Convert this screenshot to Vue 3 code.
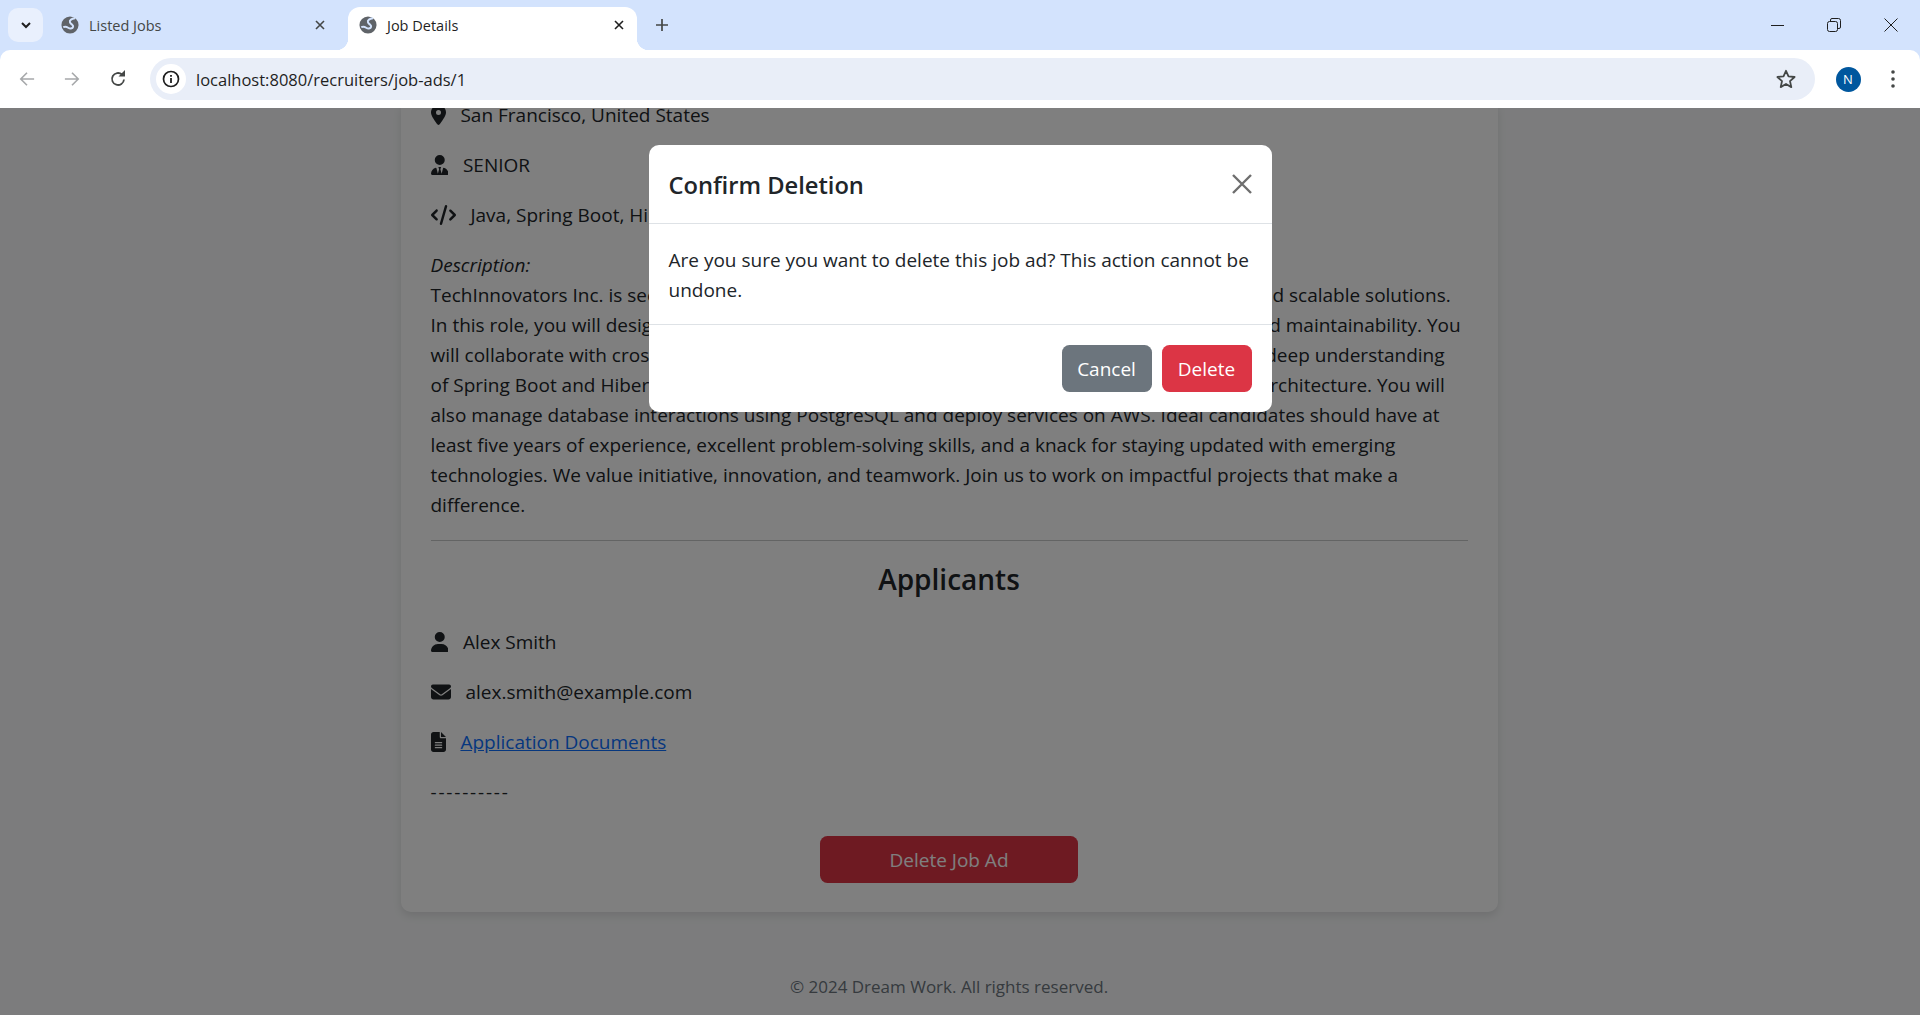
<template>
  <div class="window">
    <div class="tabstrip">
      <button class="tab-search">
        <svg width="14" height="14" viewBox="0 0 14 14"><path d="M3 5l4 4 4-4" fill="none" stroke="#1f1f1f" stroke-width="2"/></svg>
      </button>
      <div class="tab">
        <svg class="globe" viewBox="0 0 20 20"><use href="#globe"/></svg>
        <span class="tab-title">Listed Jobs</span>
        <svg class="tab-close" viewBox="0 0 12 12"><path d="M2 2l8 8M10 2l-8 8" stroke="#444746" stroke-width="1.6"/></svg>
      </div>
      <div class="tab active">
        <svg class="globe" viewBox="0 0 20 20"><use href="#globe"/></svg>
        <span class="tab-title">Job Details</span>
        <svg class="tab-close" viewBox="0 0 12 12"><path d="M2 2l8 8M10 2l-8 8" stroke="#1f1f1f" stroke-width="1.6"/></svg>
      </div>
      <svg class="new-tab" viewBox="0 0 14 14"><path d="M7 1v12M1 7h12" stroke="#444746" stroke-width="1.7"/></svg>
      <div class="win-controls">
        <svg viewBox="0 0 14 14"><path d="M1 7.5h13" stroke="#1f1f1f" stroke-width="1"/></svg>
        <svg viewBox="0 0 14 14"><path d="M3.5 3V2a1.500 1.500 0 0 1 1.500-1.500h6.500A2 2 0 0 1 13.500 2.500V9a1.500 1.500 0 0 1-1.500 1.500h-1" fill="none" stroke="#1f1f1f"/><rect x="0.5" y="3.500" width="10" height="10" rx="2" fill="none" stroke="#1f1f1f"/></svg>
        <svg viewBox="0 0 14 14"><path d="M.5.5l13 13M13.500.5l-13 13" stroke="#1f1f1f" stroke-width="1"/></svg>
      </div>
    </div>

    <svg width="0" height="0" class="defs">
      <symbol id="globe" viewBox="0 0 20 20">
        <circle cx="10" cy="10" r="9.500" fill="#5f6368"/>
        <path d="M15.500 2.500C12 3 9 4.500 10 7c1 2.500 4 2.500 3.500 5s-4 2-5.500 1-3-2-5.500-.5" fill="none" stroke="#d3e3fd" stroke-width="2.200"/>
      </symbol>
    </svg>

    <div class="toolbar">
      <svg class="nav-icon" viewBox="0 0 18 18"><path d="M17 9H2M9 2L2 9l7 7" fill="none" stroke="#a6a8aa" stroke-width="1.800"/></svg>
      <svg class="nav-icon" viewBox="0 0 18 18"><path d="M1 9h15M9 2l7 7-7 7" fill="none" stroke="#a6a8aa" stroke-width="1.800"/></svg>
      <svg class="nav-icon" viewBox="0 0 18 18"><path d="M15 9.500A6 6 0 1 1 13 4.500" fill="none" stroke="#444746" stroke-width="1.800"/><path d="M9.500 6.500H16V0z" fill="#444746"/></svg>
      <div class="omnibox">
        <span class="site-info">
          <svg width="18" height="18" viewBox="0 0 18 18"><circle cx="9" cy="9" r="7.500" fill="none" stroke="#1f1f1f" stroke-width="1.700"/><path d="M9 8v5M9 5v1.800" stroke="#1f1f1f" stroke-width="1.800"/></svg>
        </span>
        <span class="url">localhost:8080/recruiters/job-ads/1</span>
        <svg class="star" viewBox="0 0 20 20"><path d="M10 1.800l2.500 5.600 6.100.6-4.600 4.100 1.300 6L10 15l-5.300 3.100 1.300-6L1.400 8l6.100-.6z" fill="none" stroke="#444746" stroke-width="1.800" stroke-linejoin="round"/></svg>
      </div>
      <span class="avatar">N</span>
      <svg class="menu" viewBox="0 0 4 20"><circle cx="2" cy="3" r="1.800"/><circle cx="2" cy="10" r="1.800"/><circle cx="2" cy="17" r="1.800"/></svg>
    </div>

    <div class="page">
      <main class="card">
        <p class="row"><svg class="fa" viewBox="0 0 384 512"><path :d="icons.location"/></svg> San Francisco, United States</p>
        <p class="row"><svg class="fa" viewBox="0 0 448 512"><path :d="icons.tie"/></svg> SENIOR</p>
        <p class="row"><svg class="fa" viewBox="0 0 640 512"><path :d="icons.code"/></svg> Java, Spring Boot, Hibernate, PostgreSQL, AWS</p>
        <p class="description">
          <em>Description:</em>
          <span v-for="line in description" :key="line" class="line">{{ line }}</span>
        </p>
        <hr>
        <h4>Applicants</h4>
        <p class="row"><svg class="fa" viewBox="0 0 448 512"><path :d="icons.user"/></svg> Alex Smith</p>
        <p class="row"><svg class="fa" viewBox="0 0 512 512"><path :d="icons.envelope"/></svg> alex.smith@example.com</p>
        <p class="row"><svg class="fa" viewBox="0 0 384 512"><path :d="icons.file"/></svg> <a href="#">Application Documents</a></p>
        <p class="row dashes">----------</p>
        <div class="actions">
          <button class="btn danger wide">Delete Job Ad</button>
        </div>
      </main>
      <footer>© 2024 Dream Work. All rights reserved.</footer>

      <div class="backdrop">
        <div class="modal">
          <div class="modal-header">
            <h5>Confirm Deletion</h5>
            <svg class="modal-close" viewBox="0 0 20 20"><path d="M1 1l18 18M19 1L1 19" stroke="#6e6e6e" stroke-width="2.400"/></svg>
          </div>
          <div class="modal-body">Are you sure you want to delete this job ad? This action cannot be undone.</div>
          <div class="modal-footer">
            <button class="btn secondary">Cancel</button>
            <button class="btn danger">Delete</button>
          </div>
        </div>
      </div>
    </div>
  </div>
</template>

<script setup>
const description = [
  'TechInnovators Inc. is seeking a Senior Java Developer to join our team and construct robust and scalable solutions.',
  'In this role, you will design and implement systems with the focus on performance, security, and maintainability. You',
  'will collaborate with cross-functional teams to define and ship features. A fine candidate has a deep understanding',
  'of Spring Boot and Hibernate, along with strong experience in RESTful APIs and microservices architecture. You will',
  'also manage database interactions using PostgreSQL and deploy services on AWS. Ideal candidates should have at',
  'least five years of experience, excellent problem-solving skills, and a knack for staying updated with emerging',
  'technologies. We value initiative, innovation, and teamwork. Join us to work on impactful projects that make a',
  'difference.'
]

const icons = {
  location: 'M215.7 499.2C267 435 384 279.4 384 192C384 86 298 0 192 0S0 86 0 192c0 87.4 117 243 168.3 307.2c12.3 15.3 35.1 15.3 47.4 0zM192 128a64 64 0 1 1 0 128 64 64 0 1 1 0-128z',
  user: 'M224 256A128 128 0 1 0 224 0a128 128 0 1 0 0 256zm-45.7 48C79.8 304 0 383.8 0 482.3C0 498.7 13.3 512 29.7 512H418.3c16.4 0 29.7-13.3 29.7-29.7C448 383.8 368.2 304 269.7 304H178.3z',
  tie: 'M96 128a128 128 0 1 0 256 0A128 128 0 1 0 96 128zm94.500 200.200l18.600 31L175.800 483.100l-36-146.900c-2-8.100-9.800-13.400-17.900-11.300C51.900 342.400 0 405.800 0 481.300c0 17 13.800 30.700 30.700 30.700H162.500c0 0 0 0 .1 0H168 280h5.500c0 0 0 0 .1 0H417.300c17 0 30.700-13.800 30.700-30.700c0-75.500-51.900-138.900-121.900-156.400c-8.100-2-15.900 3.300-17.900 11.300l-36 146.900L238.900 359.200l18.600-31c6.400-10.700-1.300-24.200-13.700-24.200H224 204.300c-12.400 0-20.100 13.600-13.700 24.200z',
  code: 'M392.800 1.200c-17-4.900-34.700 5-39.600 22l-128 448c-4.900 17 5 34.700 22 39.600s34.700-5 39.600-22l128-448c4.900-17-5-34.700-22-39.600zm80.600 120.100c-12.500 12.500-12.500 32.800 0 45.300L562.700 256l-89.400 89.400c-12.500 12.500-12.500 32.800 0 45.300s32.800 12.500 45.300 0l112-112c12.500-12.500 12.500-32.800 0-45.300l-112-112c-12.500-12.500-32.800-12.500-45.300 0zm-306.700 0c-12.500-12.500-32.800-12.500-45.300 0l-112 112c-12.500 12.500-12.500 32.800 0 45.300l112 112c12.500 12.500 32.800 12.500 45.300 0s12.500-32.800 0-45.300L77.300 256l89.400-89.400c12.500-12.500 12.500-32.800 0-45.300z',
  envelope: 'M48 64C21.500 64 0 85.500 0 112c0 15.100 7.100 29.300 19.200 38.400L236.800 313.600c11.400 8.500 27 8.500 38.400 0L492.800 150.400c12.100-9.100 19.200-23.300 19.200-38.400c0-26.500-21.500-48-48-48H48zM0 176V384c0 35.300 28.700 64 64 64H448c35.300 0 64-28.700 64-64V176L294.400 339.200c-22.800 17.100-54 17.100-76.800 0L0 176z',
  file: 'M64 0C28.700 0 0 28.700 0 64V448c0 35.300 28.700 64 64 64H320c35.300 0 64-28.700 64-64V160H256c-17.700 0-32-14.300-32-32V0H64zM256 0V128H384L256 0zM112 256H272c8.800 0 16 7.200 16 16s-7.200 16-16 16H112c-8.800 0-16-7.200-16-16s7.200-16 16-16zm0 64H272c8.800 0 16 7.200 16 16s-7.200 16-16 16H112c-8.800 0-16-7.200-16-16s7.200-16 16-16zm0 64H272c8.800 0 16 7.200 16 16s-7.200 16-16 16H112c-8.800 0-16-7.200-16-16s7.200-16 16-16z'
}
</script>

<style>
html, body {
  overflow: hidden;
}
</style>

<style scoped>
.window {
  height: 1015px;
  display: flex;
  flex-direction: column;
  overflow: hidden;
  background: #d3e3fd;
  font-family: "Open Sans", "Noto Sans", sans-serif;
  color: #212529;
}

.defs {
  position: absolute;
}

.tabstrip {
  height: 50px;
  flex: none;
  display: flex;
  align-items: flex-end;
  padding-left: 8px;
  box-sizing: border-box;
}

.tab-search {
  width: 35px;
  height: 34px;
  margin-bottom: 8px;
  padding: 0;
  border: 0;
  border-radius: 10px;
  background: #e9f0fd;
  display: flex;
  align-items: center;
  justify-content: center;
}

.tab {
  width: 289px;
  height: 43px;
  margin-left: 5px;
  padding: 0 12px 7px 11px;
  box-sizing: border-box;
  display: flex;
  align-items: center;
  font-size: 14.500px;
  color: #444746;
}

.tab:first-of-type {
  width: 300px;
  padding-left: 13px;
  padding-right: 22px;
}

.tab.active {
  position: relative;
  background: #fff;
  border-radius: 12px 12px 0 0;
  color: #1f1f1f;
  margin-left: 0;
}

.tab.active::before,
.tab.active::after {
  content: "";
  position: absolute;
  bottom: 0;
  width: 12px;
  height: 12px;
  background: radial-gradient(circle at 0 0, #d3e3fd 12px, #fff 12.500px);
}

.tab.active::before {
  left: -12px;
}

.tab.active::after {
  right: -12px;
  background: radial-gradient(circle at 100% 0, #d3e3fd 12px, #fff 12.500px);
}

.globe {
  width: 18px;
  height: 18px;
  flex: none;
}

.tab-title {
  margin-left: 10px;
  flex: 1;
}

.tab-close {
  width: 12px;
  height: 12px;
  flex: none;
}

.new-tab {
  width: 14px;
  height: 14px;
  margin: 0 0 18px 18px;
}

.win-controls {
  margin-left: auto;
  align-self: flex-start;
  padding: 18px 22px 0 0;
  display: flex;
  gap: 43px;
}

.win-controls svg {
  width: 14px;
  height: 14px;
}

.toolbar {
  height: 58px;
  flex: none;
  box-sizing: border-box;
  background: #fff;
  border-radius: 10px 10px 0 0;
  padding: 8px 25px 8px 19px;
  display: flex;
  align-items: center;
}

.nav-icon {
  width: 16px;
  height: 16px;
  margin-right: 29px;
  flex: none;
}

.nav-icon:nth-of-type(3) {
  width: 18px;
  height: 18px;
  margin-right: 23px;
}

.omnibox {
  flex: 1;
  height: 42px;
  border-radius: 21px;
  background: #e9eef8;
  display: flex;
  align-items: center;
  padding: 0 19px 0 6px;
}

.site-info {
  width: 30px;
  height: 30px;
  border-radius: 50%;
  background: #fff;
  display: flex;
  align-items: center;
  justify-content: center;
}

.url {
  margin-left: 10px;
  font-size: 16.500px;
  color: #1f1f1f;
  flex: 1;
}

.star {
  width: 20px;
  height: 20px;
}

.avatar {
  width: 25px;
  height: 25px;
  margin-left: 21px;
  border-radius: 50%;
  background: #00579e;
  color: #fff;
  font-size: 13px;
  display: flex;
  align-items: center;
  justify-content: center;
}

.menu {
  width: 4px;
  height: 20px;
  margin-left: 30.500px;
  fill: #444746;
}

.page {
  position: relative;
  flex: 1;
  min-height: 0;
  overflow: hidden;
  background: #f8f9fa;
  display: flex;
  flex-direction: column;
  justify-content: flex-end;
  align-items: center;
  padding-right: 22px;
  font-size: 19px;
  line-height: 30px;
}

.card {
  width: 1097px;
  flex: none;
  box-sizing: border-box;
  padding: 0 30px 29px;
  background: #fff;
  border-radius: 10px;
  box-shadow: 0 4px 8px rgba(0, 0, 0, .1);
}

.row,
.description {
  margin: 0 0 20px;
}

.dashes {
  letter-spacing: 1.800px;
}

.fa {
  height: 20px;
  margin-right: 10px;
  vertical-align: -3px;
  fill: #212529;
}

.line {
  display: block;
  white-space: nowrap;
}

hr {
  margin: 20px 0;
  border: 0;
  border-top: 1px solid rgba(33, 37, 41, .25);
}

h4 {
  margin: 0 0 30px;
  text-align: center;
  font-size: 28px;
  font-weight: 600;
  line-height: 36px;
}

a {
  color: #0d6efd;
}

.actions {
  display: flex;
  justify-content: center;
  margin-top: 29px;
}

.btn {
  height: 47px;
  width: 90px;
  padding: 0;
  border: 0;
  border-radius: 7.500px;
  font: inherit;
  color: #fff;
}

.btn.wide {
  width: 258px;
}

.danger {
  background: #dc3545;
}

.secondary {
  background: #6c757d;
}

footer {
  flex: none;
  height: 103px;
  box-sizing: border-box;
  padding-top: 60px;
  font-size: 17px;
  color: #6c757d;
}

.backdrop {
  position: absolute;
  inset: 0;
  background: rgba(0, 0, 0, .5);
  display: flex;
  justify-content: center;
  align-items: flex-start;
  padding-top: 37px;
}

.modal {
  width: 623px;
  background: #fff;
  border-radius: 10px;
}

.modal-header {
  height: 78px;
  box-sizing: content-box;
  padding: 0 20px;
  display: flex;
  align-items: center;
  justify-content: space-between;
  border-bottom: 1px solid #dee2e6;
}

h5 {
  margin: 2px 0 0;
  font-size: 23.700px;
  font-weight: 600;
  line-height: 37px;
}

.modal-close {
  width: 20px;
  height: 20px;
}

.modal-body {
  padding: 21px 20px 19px;
}

.modal-footer {
  padding: 20px;
  display: flex;
  justify-content: flex-end;
  gap: 10px;
  border-top: 1px solid #dee2e6;
}
</style>
